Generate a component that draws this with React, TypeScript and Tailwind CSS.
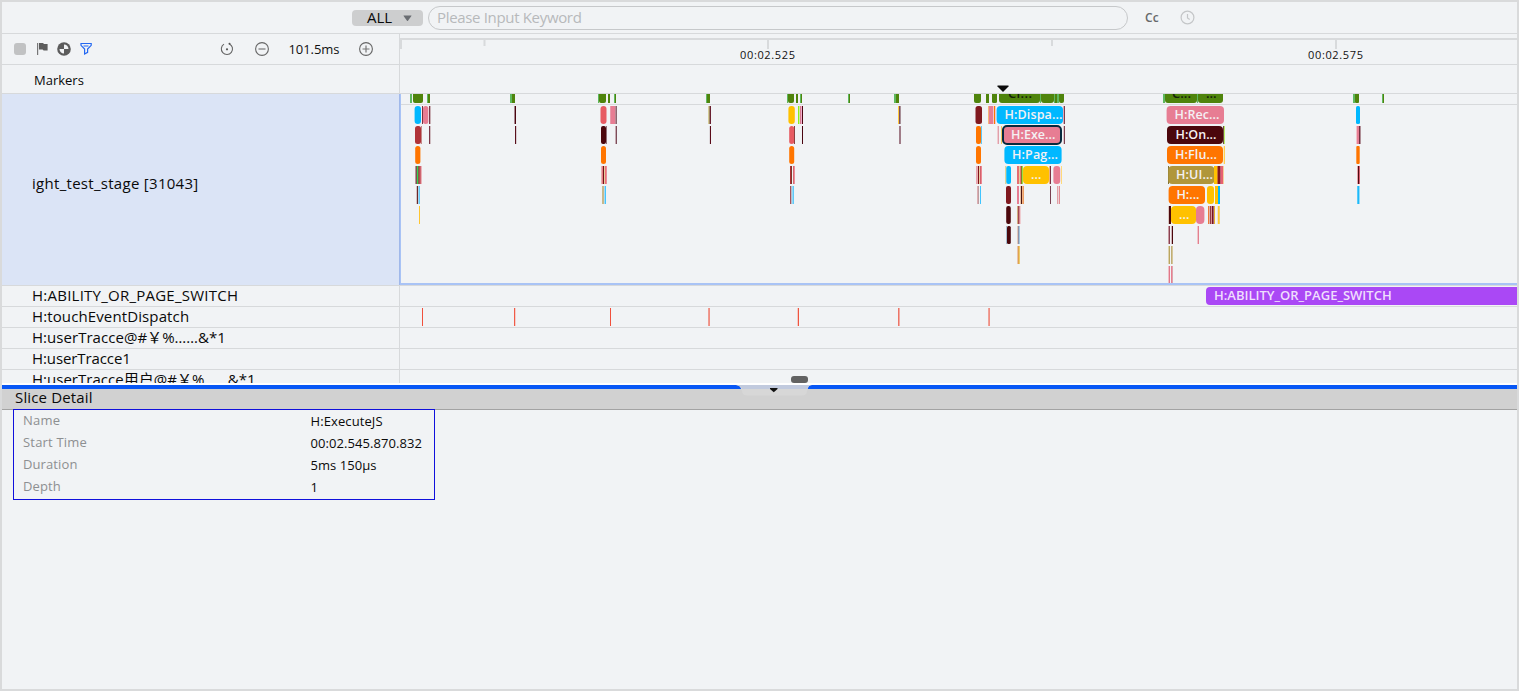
import type { ReactNode } from 'react';

type Slice = [x: number, w: number, color: string, radius?: number];

const BLUE = '#00b8ff';
const PINK = '#e77d93';
const RED = '#e75b62';
const ORANGE = '#ff7500';
const YELLOW = '#ffc100';
const MAROON = '#80181e';
const DARK = '#4b070c';
const OLIVE = '#b0963a';
const GREEN = '#4f840c';
const LEAF = '#5fb85f';

const cpuSlices: Slice[] = [
  [410, 2, LEAF], [413, 10, GREEN, 2], [427, 1, LEAF], [428, 2, GREEN],
  [510, 2, LEAF], [512, 3, GREEN], [598, 1, LEAF], [599, 7, GREEN, 2],
  [608, 2, GREEN], [614, 1, LEAF], [615, 1, GREEN], [706, 1, LEAF], [707, 3, GREEN],
  [787, 1, LEAF], [788, 6, GREEN, 2], [796, 2, GREEN], [800, 1, LEAF], [801, 1, GREEN],
  [848, 1, LEAF], [849, 1, GREEN], [894, 2, LEAF], [896, 3, GREEN],
  [974, 7, GREEN, 2], [986, 3, GREEN], [992, 5, GREEN, 1.5], [999, 41, GREEN, 3],
  [1040, 1, LEAF], [1041, 13, GREEN, 3], [1054, 1, LEAF], [1055, 2, GREEN], [1057, 2, LEAF], [1059, 5, GREEN, 2],
  [1163, 2, LEAF], [1165, 32, GREEN, 3], [1197, 1, LEAF], [1198, 25, GREEN, 3],
  [1353, 2, LEAF], [1355, 4, GREEN, 1], [1382, 1, LEAF], [1383, 1, GREEN],
];

const depths: Slice[][] = [
  [
    [414.6, 6.4, BLUE, 3], [422, 1, '#7a3040'], [423, 5.3, PINK, 2.5], [429, 1, '#7a3848'], [430, 1, '#c9b0b5'],
    [514, 1, '#a88890'], [515, 1, '#4a0510'],
    [600.5, 6, RED, 3], [610, 1, '#e79aab'], [611, 4, PINK], [615, 1, '#b98a94'], [616, 1, '#8d6470'],
    [708, 1, '#d3cb97'], [709, 1, '#a08465'], [710, 1, '#6a2030'],
    [788.4, 6.4, YELLOW, 3], [798, 1.4, '#8aef1a'], [800, 1, '#d97b90'], [801, 1, '#f2b0d0'], [802, 1, '#4a0510'],
    [898, 1, '#ffc83a'], [899, 1, '#7a5060'], [900, 1, '#a89098'],
    [975.5, 6.5, MAROON, 2.5], [988, 1, '#f6b478'], [989, 4, PINK], [993, 1, '#f3c5cc'], [994, 1, ORANGE], [995, 1, '#eecad0'],
    [996.6, 66.4, BLUE, 4], [1063, 1, '#e5a5b3'], [1064, 1, '#7a4050'],
    [1166.6, 57.4, PINK, 4], [1356, 4, BLUE, 1.5],
  ],
  [
    [415, 6, '#b03338', 2.5], [421, 1, '#c48a8a'], [429, 1, '#7a3848'], [430, 1, '#d0bec2'],
    [515, 1, '#5a101c'], [516, 1, '#d8cdd1'], [601, 5, DARK, 2], [606, 1, '#907078'],
    [615, 1, '#c5abb2'], [616, 1, '#7d4c59'], [709, 1, '#dfdadd'], [710, 1, '#5a0a18'],
    [789.2, 5, RED, 2.5], [794, 1, '#8a4040'], [802, 1, '#4a0510'], [899, 2, '#a07c88'],
    [976, 5, ORANGE, 2], [981, 1, '#60c8f8'], [997, 1, '#f0cbd1'], [998, 1, '#dfa0ab'], [1001, 1, '#f3c75c'],
    [1063, 1, '#dec5cb'], [1064, 1, '#7a4050'],
    [1167, 56, DARK, 4], [1223, 1, '#705040'], [1224, 1, '#b8f068'],
    [1356, 1, '#f2c2ca'], [1357, 2, PINK], [1359, 1, '#703040'], [1360, 1, '#b09098'],
  ],
  [
    [415.2, 5.2, ORANGE, 2.5], [601, 5, ORANGE, 2.5], [789.2, 5, ORANGE, 2.5], [976, 5, ORANGE, 2.5],
    [1004.4, 57.2, BLUE, 4], [1167, 56, ORANGE, 4], [1223, 1, '#f9e8be'], [1224, 1, '#ffd050'],
    [1356.3, 3.4, ORANGE, 1],
  ],
  [
    [415, 1, '#b59397'], [416, 1, '#80504e'], [417, 1, '#30d352'], [418, 1, '#85603f'], [419, 1, '#b0504e'], [420, 1, '#ce6570'], [421, 1, '#eab5ba'],
    [601, 1, '#e8b0b0'], [602, 1, '#e58085'], [603, 1, '#701018'], [604, 1, '#e4cf9f'], [605, 1, '#ef6f7b'], [606, 1, '#e99097'],
    [790, 1, '#b03038'], [791, 1, '#7d392c'], [793, 1, '#d76a72'], [794, 1, '#ee919b'],
    [976, 1, '#eaa0ad'], [977, 1, '#e5b0b0'], [978, 1, '#801018'], [979, 1, '#e8cfa5'], [980, 1, '#d4606c'], [981, 1, '#ec8a94'],
    [1005.3, 1, '#d8c870'], [1006.3, 4.7, BLUE, 2], [1017, 2, '#e56d70'], [1019, 1, '#e4cf9f'], [1020, 1, '#ea7478'], [1021, 1, '#857c20'], [1022, 1, '#9ce247'],
    [1023, 26, YELLOW, 4], [1049, 1, '#edb080'], [1050, 1, '#7a3040'], [1053.4, 6.8, PINK, 3], [1061, 1, '#ffd97a'],
    [1168, 1, '#807035'], [1168.3, 46, OLIVE, 4], [1214, 3, YELLOW], [1217, 1, '#c8702c'], [1218, 2, MAROON], [1220, 1, '#c06070'], [1221, 2, '#e86070'], [1223, 1, '#f3cf9c'],
    [1357, 1, '#e8a0a8'], [1358, 1, '#500a10'], [1359, 1, '#d86070'],
  ],
  [
    [416, 1, '#d4c2c6'], [417, 1, '#6a2828'], [418, 1, '#a6d8f0'], [419, 1, '#66cdfa'],
    [602, 2, '#c9b88a'], [604, 1, '#a6dcf5'], [605, 1, '#44c4ff'],
    [790, 1, '#a85058'], [791, 1, '#b8bdca'], [792, 1, '#94d9f8'], [793, 1, '#62c9f6'],
    [977, 1, '#dcaeb3'], [978, 1, '#bd9da0'], [980, 1, '#40c4ff'], [1006, 5, MAROON, 2],
    [1017, 2, PINK], [1020, 1, '#e5c4ac'], [1021, 1, '#4a1510'], [1022, 1, '#f4b284'], [1023, 1, '#eda064'], [1050, 1, '#7a4050'], [1057, 1, '#e0a0a6'], [1058, 1, '#f0d0d4'], [1059, 1, '#e08a93'],
    [1168.6, 36.4, ORANGE, 4], [1207, 7, YELLOW, 3], [1215, 3, YELLOW], [1218, 2, BLUE],
    [1357, 1, '#55ccfc'], [1358, 1, '#1fb8f8'], [1359, 1, '#93dcf8'],
  ],
  [
    [419, 1, '#ffc530'], [1006.2, 4.6, DARK, 2], [1017, 1, '#cfae80'], [1018, 1, '#a34752'], [1019, 1, '#d78b8e'], [1020, 1, '#efcdd1'],
    [1168, 1, '#d9c5c0'], [1169, 2, DARK], [1171, 25, YELLOW, 4], [1196, 8.4, PINK, 4],
    [1208, 1, '#ec7838'], [1209, 1, '#dfb2a5'], [1210, 1, '#943b42'], [1211, 1, '#d4929a'], [1212, 1, '#79151d'], [1213, 1, '#a05d70'], [1214, 1, '#ebb330'], [1217, 1, '#f3dfcc'], [1218, 1, '#ffcb2e'], [1219, 1, '#f4ce70'],
  ],
  [
    [1006, 1, '#a5bed0'], [1007, 3.8, DARK, 1.5], [1017, 1, '#e2c8ba'], [1018, 1, '#8e90a6'], [1019, 1, '#a4c9df'],
    [1168, 1, '#c79aa2'], [1169, 1, '#8a4050'], [1171, 1, '#d0b4ba'], [1172, 1, DARK], [1197, 1, '#f0c3ca'], [1198, 1, '#e2808f'],
  ],
  [[1017, 1, '#eac3ab'], [1018, 1, '#dfa54b'], [1019, 1, '#eccb70'], [1168, 1, '#ddd2b0'], [1169, 1, '#bba660'], [1171, 1, '#bfae76'], [1172, 1, '#d5c69b']],
  [[1168, 1, '#efbfc8'], [1169, 1, '#e17888'], [1171, 1, '#e77f91'], [1172, 1, '#dda5ad']],
];

const labels: [x: number, depth: number, text: string, width: number][] = [
  [1004.5, 0, 'H:Dispa...', 58], [1011, 1, 'H:Exe...', 44.5], [1012, 2, 'H:Pag...', 46], [1031, 3, '...', 10.5],
  [1174.5, 0, 'H:Rec...', 45], [1175.5, 1, 'H:On...', 41], [1175, 2, 'H:Flu...', 42], [1176, 3, 'H:UI...', 37], [1176.5, 4, 'H:...', 23], [1179, 5, '...', 10.5],
];

const touches: Slice[] = [
  [422, 1, '#f0503c'], [514, 1, '#ef5b48'], [515, 1, '#f6cdc9'], [610, 1, '#f0503c'], [708, 1, '#ef9b91'], [709, 1, '#ef8e82'],
  [797, 1, '#f5c9c4'], [798, 1, '#ee5540'], [898, 1, '#ec7567'], [899, 1, '#f2aca5'], [988, 1, '#efa198'], [989, 1, '#ef8e82'],
];

const FlameChart = () => (
  <svg width="1117" height="191" viewBox="400 94 1117 191" className="block">
    <path d="M400 104.5H1517" stroke="#d7d9db" />
    {cpuSlices.map(([x, w, c, r], i) => (
      <rect key={i} x={x} y={88} width={w} height={15} rx={r ?? 0} fill={c} />
    ))}
    <g fill="#14200a" fontSize="13" fontWeight="600">
      <text x="1008" y="97.500" textLength="24">Cl...</text>
      <text x="1172" y="97.500" textLength="19">C...</text>
      <text x="1206" y="97.500" textLength="10.500">...</text>
    </g>
    {depths.map((row, d) =>
      row.map(([x, w, c, r], i) => (
        <rect key={`${d}-${i}`} x={x} y={106 + d * 20} width={w} height={18} rx={r ?? 0} fill={c} />
      )),
    )}
    <rect x="1003" y="126" width="58" height="18" rx="4" fill={PINK} stroke="#06293d" strokeWidth="2" />
    <g fill="#f4f1f3" fontSize="12.500" fontWeight="600">
      {labels.map(([x, d, t, w]) => (
        <text key={`${x}-${d}`} x={x} y={119 + d * 20} textLength={w}>{t}</text>
      ))}
    </g>
    <path d="M400 284H1517" stroke="#a9c3f5" strokeWidth="2" />
  </svg>
);

const TimeRuler = () => (
  <svg width="1117" height="30" viewBox="400 34 1117 30" className="block">
    <g fill="#d8dadc">
      <rect x="401" y="38" width="1116" height="2" />
      <rect x="400" y="38" width="2" height="11" />
      <rect x="483.500" y="40" width="2" height="6" />
      <rect x="767" y="40" width="2" height="9" />
      <rect x="1051" y="40" width="2" height="6" />
      <rect x="1335" y="40" width="2" height="9" />
    </g>
    <g fill="#111" fontSize="11">
      <text x="740" y="59" textLength="55">00:02.525</text>
      <text x="1308" y="59" textLength="55">00:02.575</text>
    </g>
  </svg>
);

const TrackRow = ({ name, tracking, children }: { name: string; tracking: string; children?: ReactNode }) => (
  <div className="flex h-[21px] shrink-0 border-b border-[#d7d9db]">
    <div className={`w-[398px] shrink-0 border-r border-[#d7d9db] pl-[30px] text-[15px] leading-[19px] whitespace-nowrap ${tracking}`}>
      {name}
    </div>
    <div className="min-w-0 flex-1">{children}</div>
  </div>
);

const Toolbar = () => (
  <div className="flex h-[30px] items-center">
    <svg width="397" height="30" viewBox="2 34 397 30" fill="none">
      <rect x="14" y="43" width="12" height="12" rx="3" fill="#c1c2c3" />
      <path d="M37 43h1.2v12H37z" fill="#777" />
      <path d="M39 43h4l1 1h3.6v6.5h-4l-1-1H39z" fill="#5c5c5c" />
      <circle cx="64" cy="49" r="6.8" fill="#5c5c5c" />
      <path d="M64 49v-4.500a4.500 4.500 0 0 1 4.500 4.500zM64 49v4.500a4.500 4.500 0 0 1-4.500-4.500z" fill="#f1f3f5" />
      <path d="M81 43.500h10.200v1.800l-3.600 3.700v3.300l-3 1.700v-5L81 45.300z" stroke="#2468f2" strokeWidth="1.200" />
      <path d="M83.500 46h5" stroke="#2468f2" />
      <path d="M229.500 43.900a5.600 5.600 0 1 1-5.500.2" stroke="#666" strokeWidth="1.100" />
      <circle cx="229.500" cy="43.800" r="1" fill="#555" />
      <circle cx="227" cy="49.300" r="1.100" fill="#555" />
      <circle cx="262" cy="49" r="6.400" stroke="#666" strokeWidth="1.100" />
      <path d="M258.500 49h7" stroke="#777" strokeWidth="1.200" />
      <text x="288.500" y="54" fontSize="13" fill="#111" textLength="51">101.5ms</text>
      <circle cx="366" cy="49" r="6.400" stroke="#666" strokeWidth="1.100" />
      <path d="M362.500 49h7M366 45.500v7" stroke="#777" strokeWidth="1.200" />
    </svg>
  </div>
);

const details = [
  ['Name', 'H:ExecuteJS', 'tracking-[0.2px]', 'tracking-[0.1px]'],
  ['Start Time', '00:02.545.870.832', 'tracking-[0.2px]', 'tracking-[0.07px]'],
  ['Duration', '5ms 150μs', 'tracking-[0.1px]', 'tracking-[0.05px]'],
  ['Depth', '1', 'tracking-[0.1px]', 'tracking-[0.1px]'],
];

export default function App() {
  return (
    <div className="flex h-[691px] w-[1519px] flex-col overflow-hidden border-2 border-[#d9dadb] bg-[#f1f3f5] font-['Open_Sans','Noto_Sans_CJK_SC',sans-serif] text-[#0a0a0a]">
      <header className="flex h-[32px] shrink-0 items-center border-b border-[#d7d9db] pl-[350px]">
        <div className="flex h-4 w-[71px] items-center rounded bg-[#cdcecf] pl-[15px]">
          <span className="w-[36px] text-[15px] leading-[14px] pb-[2px]">ALL</span>
          <svg className="mt-px" width="9" height="7" viewBox="0 0 9 7"><path d="M.8.5h7.400q.6 0 .2.600L5 5.800q-.5.600-1 0L.6 1.100Q.2.500.8.500z" fill="#6a6d72" /></svg>
        </div>
        <div className="ml-[5px] flex h-6 w-[700px] items-center rounded-full border border-[#c6c8ca] pl-2 text-[15px] tracking-[-0.33px] text-[#b7b9bb]">
          Please Input Keyword
        </div>
        <span className="ml-[17px] w-[34.5px] text-[12px] font-semibold tracking-[0.2px] text-[#66686a]">Cc</span>
        <svg width="15" height="15" viewBox="0 0 15 15" fill="none" stroke="#c4c6c8" strokeWidth="1.200">
          <circle cx="7.500" cy="7.500" r="6.400" />
          <path d="M7.500 4v4l2.200 1.500" />
        </svg>
      </header>

      <section className="flex h-[31px] shrink-0 border-b border-[#d7d9db]">
        <div className="w-[398px] shrink-0 border-r border-[#d7d9db]"><Toolbar /></div>
        <TimeRuler />
      </section>

      <section className="flex h-[29px] shrink-0 border-b border-[#d7d9db]">
        <div className="w-[398px] shrink-0 border-r border-[#d7d9db] pl-8 pt-[1px] text-[13px] leading-[29px]">Markers</div>
        <div className="relative flex-1">
          <svg className="absolute top-[20px] left-[597px]" width="12" height="8" viewBox="0 0 12 8"><path d="M.5.500h11v1L6 7 .5 1.500z" fill="#0a0a0a" /></svg>
        </div>
      </section>

      <main className="relative flex h-[289px] shrink-0 flex-col overflow-hidden">
        <div className="flex h-[192px] shrink-0 border-b border-[#d7d9db]">
          <div className="flex w-[398px] shrink-0 items-center border-r border-[#a0b8ea] bg-[#dbe4f6] pl-[30px] text-[15px] tracking-[0.29px]">
            <span className="-mt-[12px]">ight_test_stage [31043]</span>
          </div>
          <div className="relative">
            <FlameChart />
            <div className="absolute top-0 left-0 h-[191px] w-px bg-[#a9c3f5]" />
          </div>
        </div>
        <TrackRow name="H:ABILITY_OR_PAGE_SWITCH" tracking="tracking-[0.24px]">
          <div className="ml-[806px] mt-[1px] h-[18px] rounded-l-[4px] bg-[#aa48f5] pl-2 text-[13px] leading-[17px] font-semibold text-[#efdffd]">
            H:ABILITY_OR_PAGE_SWITCH
          </div>
        </TrackRow>
        <TrackRow name="H:touchEventDispatch" tracking="tracking-[0.12px]">
          <svg width="1117" height="20" viewBox="400 307 1117 20" className="block">
            {touches.map(([x, w, c]) => <rect key={x} x={x} y="308" width={w} height="18" fill={c} />)}
          </svg>
        </TrackRow>
        <TrackRow name="H:userTracce@#￥%……&*1" tracking="tracking-[0.04px]" />
        <TrackRow name="H:userTracce1" tracking="tracking-[-0.1px]" />
        <TrackRow name="H:userTracce用户@#￥%……&*1" tracking="tracking-[0.02px]" />
        <div className="absolute top-[282px] left-[789px] h-[7px] w-[17px] rounded-[3px] bg-[#626262]" />
      </main>

      <div className="relative h-[6px] shrink-0 border-t-2 border-white bg-[#0857f5]">
        <svg className="absolute -top-[2px] left-[733px]" width="80" height="14" viewBox="735 383 80 14">
          <path d="M736 385h76c-4 0-4 4-5 6 0 3-2 4.500-5 4.500h-54c-4 0-6-1.500-6-4.500-1-2-1-5-6-6z" fill="#d7d7d7" />
          <path d="M736 385h76c-3.500.5-4 2-5 4h-65c-1-2-1-3.500-6-4z" fill="#c1cade" />
          <path d="M770 388h7.500v1l-3.700 3.300-3.800-3.300z" fill="#111" />
        </svg>
      </div>

      <div className="h-[21px] shrink-0 border-b border-[#a3a3a3] bg-[#d1d1d1] pl-[13px] text-[15px] leading-[17px] tracking-[0.15px]">Slice Detail</div>
      <dl className="-mt-px ml-[11px] flex h-[91px] w-[422px] shrink-0 flex-col border border-[#1010dc] pl-[9px]">
        {details.map(([k, v, kt, vt]) => (
          <div key={k} className="flex h-[22px] text-[13px] leading-[20px]">
            <dt className={`w-[287.5px] text-[#8d8f91] ${kt}`}>{k}</dt>
            <dd className={`pt-[1px] ${vt}`}>{v}</dd>
          </div>
        ))}
      </dl>
    </div>
  );
}
